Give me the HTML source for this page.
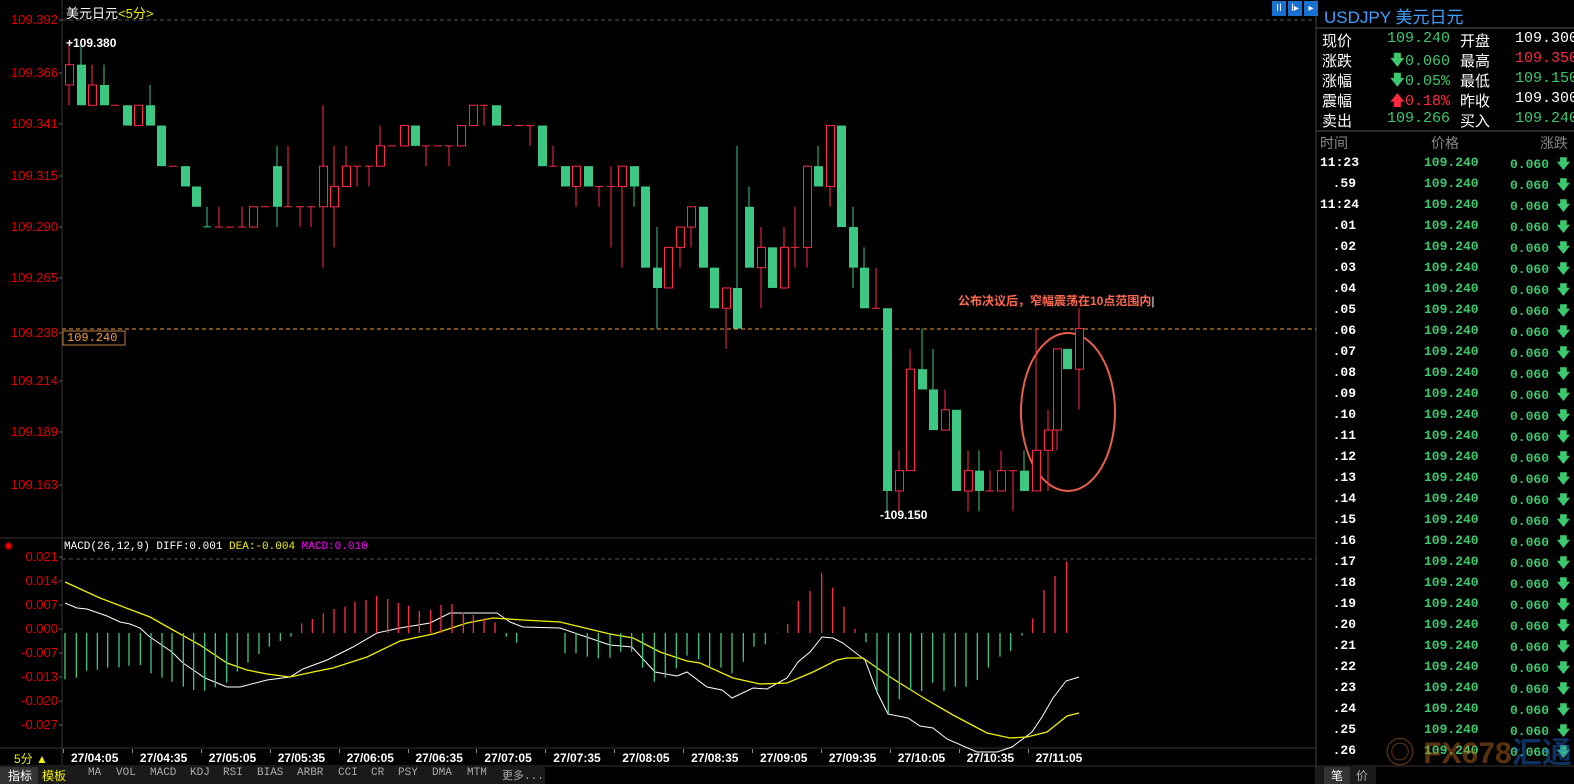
<!DOCTYPE html>
<html><head><meta charset="utf-8"><style>
*{margin:0;padding:0;box-sizing:border-box}
body{width:1574px;height:784px;background:#000;overflow:hidden;position:relative;font-family:"Liberation Sans","Noto Sans CJK SC",sans-serif;color:#fff}
.a{position:absolute;white-space:nowrap}
.ax{position:absolute;right:1516px;font-size:13px;color:#e00000;text-align:right}
.mx{position:absolute;right:1516px;font-size:13px;color:#e00000;text-align:right}
.q{position:absolute;font-size:15px;font-family:"Liberation Mono","Noto Sans CJK SC",monospace}
.row{position:absolute;left:1318px;width:256px;height:21px;font-size:13px;font-family:"Liberation Mono",monospace;font-weight:bold}
.tab{position:absolute;top:767px;font-size:11px;color:#aaa;font-family:"Liberation Mono","Noto Sans CJK SC",monospace}
.ic{position:absolute;top:1px;width:14px;height:15px;background:#1a70d0;color:#fff;font-size:10px;text-align:center;line-height:15px}
</style></head><body>
<svg id="s" width="1574" height="784" style="position:absolute;left:0;top:0">
<line x1="62" y1="0" x2="62" y2="766" stroke="#333"/>
<line x1="1316" y1="0" x2="1316" y2="784" stroke="#444"/>
<line x1="62" y1="20" x2="1316" y2="20" stroke="#555" stroke-dasharray="4,3"/>
<line x1="0" y1="538" x2="1316" y2="538" stroke="#333"/>
<line x1="62" y1="559" x2="1316" y2="559" stroke="#555" stroke-dasharray="4,3"/>
<line x1="0" y1="748" x2="1316" y2="748" stroke="#333"/>
<line x1="0" y1="766" x2="1574" y2="766" stroke="#333"/>
<line x1="1316" y1="28" x2="1574" y2="28" stroke="#555"/>
<line x1="1316" y1="131" x2="1574" y2="131" stroke="#555"/>
<line x1="62" y1="329" x2="1316" y2="329" stroke="#f0a040" stroke-dasharray="4,3"/>
<rect x="63" y="331" width="62" height="14" fill="#000" stroke="#c08040"/>
<ellipse cx="1068" cy="412" rx="47" ry="79" fill="none" stroke="#e8604c" stroke-width="2"/>
<polyline fill="none" stroke="#fff" stroke-width="1" points="65,603 77,608 87,609 107,616 120,622 130,624 140,628 150,637 172,652 183,663 205,678 227,687 240,687 267,680 290,677 303,669 327,660 353,647 377,633 400,628 430,623 450,613 473,613 497,613 510,622 523,627 560,628 610,645 632,647 655,672 677,676 687,672 707,687 722,690 732,698 753,688 767,689 787,678 798,662 810,652 822,637 833,638 843,643 865,660 877,692 888,714 908,718 920,726 933,728 947,739 977,752 997,752 1012,747 1032,732 1042,717 1053,698 1066,681 1079,677"/>
<polyline fill="none" stroke="#f0f000" stroke-width="1.3" points="65,582 100,598 150,617 173,630 200,645 227,663 247,670 267,674 290,677 313,672 333,668 367,657 400,641 433,634 467,623 493,618 523,620 560,622 610,634 633,638 660,652 687,661 700,663 733,678 760,684 787,683 813,672 837,660 847,658 863,658 890,677 927,700 953,715 987,733 1010,738 1027,737 1047,732 1067,716 1079,713"/>
<g id="c"></g>
</svg>
<div class="a" style="left:66px;top:3px;font-size:13px">美元日元<span style="color:#f0f000">&lt;5分&gt;</span></div>
<div class="a" style="left:66px;top:36px;font-size:12px;font-weight:bold">+109.380</div>
<div class="a" style="left:880px;top:508px;font-size:12px;font-weight:bold">-109.150</div>
<div class="a" style="left:67px;top:331px;font-size:12px;color:#f0a040;font-family:'Liberation Mono',monospace">109.240</div>
<div class="a" style="left:958px;top:292px;font-size:12px;font-weight:bold;color:#ff6a50">公布决议后，窄幅震荡在10点范围内<span style="color:#fff;font-weight:normal">|</span></div>
<div class="ax" style="top:12px">109.392</div>
<div class="ax" style="top:65px">109.366</div>
<div class="ax" style="top:116px">109.341</div>
<div class="ax" style="top:168px">109.315</div>
<div class="ax" style="top:219px">109.290</div>
<div class="ax" style="top:270px">109.265</div>
<div class="ax" style="top:325px">109.238</div>
<div class="ax" style="top:373px">109.214</div>
<div class="ax" style="top:424px">109.189</div>
<div class="ax" style="top:477px">109.163</div>
<div class="a" style="left:4px;top:540px;color:#f00;font-size:11px">✺</div>
<div class="a" style="left:64px;top:541px;font-size:11px;font-family:'Liberation Mono',monospace">MACD(26,12,9) DIFF:0.001 <span style="color:#f0f000">DEA:-0.004</span> <span style="color:#f0f">MACD:0.010</span></div>
<div class="mx" style="top:549px">0.021</div>
<div class="mx" style="top:573px">0.014</div>
<div class="mx" style="top:597px">0.007</div>
<div class="mx" style="top:621px">0.000</div>
<div class="mx" style="top:645px">-0.007</div>
<div class="mx" style="top:669px">-0.013</div>
<div class="mx" style="top:693px">-0.020</div>
<div class="mx" style="top:717px">-0.027</div>
<div class="a" style="left:14px;top:750px;font-size:12px;color:#f0f000">5分 ▲</div>
<div id="t"></div>
<div class="a" style="left:0;top:767px;width:545px;height:17px;background:#1a1a1a"></div>
<div class="a" style="left:0;top:767px;width:38px;height:17px;background:#333;font-size:12px;padding-left:8px">指标</div>
<div class="a" style="left:42px;top:767px;font-size:12px;color:#f0f000">模板</div>
<div class="tab" style="left:88px">MA</div><div class="tab" style="left:116px">VOL</div><div class="tab" style="left:150px">MACD</div><div class="tab" style="left:190px">KDJ</div><div class="tab" style="left:223px">RSI</div><div class="tab" style="left:257px">BIAS</div><div class="tab" style="left:297px">ARBR</div><div class="tab" style="left:338px">CCI</div><div class="tab" style="left:371px">CR</div><div class="tab" style="left:398px">PSY</div><div class="tab" style="left:432px">DMA</div><div class="tab" style="left:467px">MTM</div><div class="tab" style="left:502px">更多...</div>
<div class="ic" style="left:1272px">Iǀ</div>
<div class="ic" style="left:1288px">ǀ▸</div>
<div class="ic" style="left:1304px">▸</div>
<div class="a" style="left:1324px;top:3px;font-size:17px;color:#3ea0ff">USDJPY 美元日元</div>
<div class="q" style="left:1322px;top:30px">现价</div><div class="q" style="left:1372px;top:30px;width:78px;text-align:right;color:#3cc86e">109.240</div><div class="q" style="left:1460px;top:30px">开盘</div><div class="q" style="left:1515px;top:30px">109.300</div>
<div class="q" style="left:1322px;top:50px">涨跌</div><div class="q" style="left:1372px;top:50px;width:78px;text-align:right;color:#3cc86e">🡇0.060</div><div class="q" style="left:1460px;top:50px">最高</div><div class="q" style="left:1515px;top:50px;color:#ff2a40">109.350</div>
<div class="q" style="left:1322px;top:70px">涨幅</div><div class="q" style="left:1372px;top:70px;width:78px;text-align:right;color:#3cc86e">🡇0.05%</div><div class="q" style="left:1460px;top:70px">最低</div><div class="q" style="left:1515px;top:70px;color:#3cc86e">109.150</div>
<div class="q" style="left:1322px;top:90px">震幅</div><div class="q" style="left:1372px;top:90px;width:78px;text-align:right;color:#ff2a40">🡅0.18%</div><div class="q" style="left:1460px;top:90px">昨收</div><div class="q" style="left:1515px;top:90px">109.300</div>
<div class="q" style="left:1322px;top:110px">卖出</div><div class="q" style="left:1372px;top:110px;width:78px;text-align:right;color:#3cc86e">109.266</div><div class="q" style="left:1460px;top:110px">买入</div><div class="q" style="left:1515px;top:110px;color:#3cc86e">109.240</div>
<div class="q" style="left:1320px;top:133px;color:#888;font-size:14px">时间</div><div class="q" style="left:1431px;top:133px;color:#888;font-size:14px">价格</div><div class="q" style="left:1540px;top:133px;color:#888;font-size:14px">涨跌</div>
<div id="r"></div>
<div class="a" style="left:1385px;top:728px;font-size:30px;font-weight:bold;color:rgba(200,110,30,0.45)">◎ FX678<span style="color:rgba(30,110,210,0.45)">汇通网</span></div>
<div class="a" style="left:1316px;top:767px;width:60px;height:17px;background:#1a1a1a"></div>
<div class="a" style="left:1324px;top:767px;width:26px;height:17px;background:#333;font-size:12px;padding-left:7px">笔</div>
<div class="a" style="left:1356px;top:767px;font-size:12px;color:#aaa">价</div>
<script>
var Y=function(v){return 20+(39.2-v)*20.3};
var C=[[69,36,37,38,35],[81,37,35,38,35],[92,35,36,37,35],[104,36,35,37,35],[115,35,35,35,35],[127,35,34,35,34],[138,34,35,35,34],[150,35,34,36,34],[161,34,32,34,32],[173,32,32,32,32],[185,32,31,32,31],[196,31,30,31,30],[207,29.01,29,30,29],[219,29,29,30,29],[230,29,29,29,29],[242,29,29,30,29],[253,29,30,30,29],[265,30,30,30,30],[277,32,30,33,29],[288,30,30,33,30],[300,30,30,30,29],[311,30,30,30,29],[323,30,32,35,27],[334,30,31,33,28],[346,31,32,33,31],[357,32,32,32,31],[369,32,32,32,31],[380,32,33,34,32],[392,33,33,33,33],[404,33,34,34,33],[415,34,33,34,33],[426,33,33,33,32],[438,33,33,33,33],[449,33,33,33,32],[461,33,34,34,33],[473,34,35,35,34],[484,35,35,35,34],[496,35,34,35,34],[507,34,34,34,34],[519,34,34,34,34],[530,34,34,34,33],[542,34,32,34,32],[553,32,32,33,32],[565,32,31,32,31],[576,31,32,32,30],[588,32,31,32,31],[599,31,31,31,30],[611,31,31,32,28],[622,31,32,32,27],[634,32,31,32,30],[645,31,27,31,27],[657,27,26,29,24],[668,26,28,28,26],[680,28,29,29,27],[691,29,30,30,28],[703,30,27,30,27],[714,27,25,27,25],[726,25,26,26,23],[737,26,24,33,24],[749,30,27,31,27],[761,27,28,29,25],[772,28,26,28,26],[784,26,28,29,26],[795,28,28,30,27],[807,28,32,32,27],[818,32,31,33,31],[830,31,34,34,30],[841,34,29,34,29],[853,29,27,30,26],[864,27,25,28,25],[876,25,25,27,25],[887,25,16,25,15],[899,16,17,18,15],[910,17,22,23,17],[922,22,21,24,21],[933,21,19,23,19],[945,19,20,21,19],[956,20,16,20,16],[968,16,17,18,15],[979,17,16,18,15],[990,16,16,17,16],[1001,16,17,18,16],[1013,17,17,17,15],[1024,17,16,18,16],[1036,16,18,24,16],[1048,18,19,20,16],[1057,19,23,23,18],[1067,23,22,23,22],[1079,22,24,25,20]];
var h='';var G='#3cc882',R='#ff2a4a';
C.forEach(function(c){var x=c[0],o=Y(c[1]),cl=Y(c[2]),hi=Y(c[3]),lo=Y(c[4]);var dn=c[2]<c[1];var col=dn?G:R;var t=Math.min(o,cl),b=Math.max(o,cl);
h+='<line x1="'+x+'" y1="'+hi+'" x2="'+x+'" y2="'+lo+'" stroke="'+col+'"/>';
if(b-t<1.5){h+='<line x1="'+(x-4)+'" y1="'+t+'" x2="'+(x+4)+'" y2="'+t+'" stroke="'+col+'"/>';}
else if(dn){h+='<rect x="'+(x-4)+'" y="'+t+'" width="9" height="'+(b-t)+'" fill="'+G+'"/>';}
else{h+='<rect x="'+(x-3.5)+'" y="'+t+'" width="8" height="'+(b-t)+'" fill="#000" stroke="'+R+'"/>';}});
var B1=[[195,433],[229,428],[260,407],[292,404],[323,398],[357,397],[387,392],[421,390],[453,415],[486,428],[516,440],[550,455],[581,465],[614,467],[646,457],[680,443],[712,410],[744,383],[777,357],[808,335],[841,318],[873,305],[905,265],[937,252],[970,235],[1002,222],[1035,215],[1065,200],[1098,195],[1130,183],[1163,192],[1195,204],[1226,212],[1258,228],[1292,225],[1323,210],[1356,207],[1390,232],[1420,240],[1452,250],[1485,262],[1519,305],[1550,323]];
var B2=[[15,355],[48,355],[82,365],[115,370],[150,368],[182,350],[215,350],[248,398],[283,440],[316,428],[349,400],[381,362],[416,373],[449,398],[483,398],[516,415],[550,380],[582,335],[616,328],[650,293],[683,267],[715,198],[750,168],[785,115],[818,158],[852,215],[885,282],[918,322],[951,470],[985,535],[1018,493],[1052,465],[1085,468],[1118,443],[1152,468],[1186,455],[1218,455],[1252,435],[1285,398],[1320,365],[1352,348],[1386,302],[1418,250],[1452,165],[1485,123],[1520,80]];
function bar(x,e){var y=535+e/3,z=633;h+='<line x1="'+x+'" y1="'+z+'" x2="'+x+'" y2="'+y+'" stroke="'+(y<z?R:G)+'" stroke-width="1.3"/>';}
B1.forEach(function(b){bar(b[0]/3,b[1])});B2.forEach(function(b){bar(560+b[0]/3,b[1])});
[20,73,124,176,227,278,333,381,432,485,557,581,605,629,653,677,701,725].forEach(function(y){h+='<line x1="59" y1="'+y+'" x2="62" y2="'+y+'" stroke="#666"/>'});
document.getElementById('c').innerHTML=h;
var T=['27/04:05','27/04:35','27/05:05','27/05:35','27/06:05','27/06:35','27/07:05','27/07:35','27/08:05','27/08:35','27/09:05','27/09:35','27/10:05','27/10:35','27/11:05'];
var tt='';T.forEach(function(s,i){var x=71+i*68.9;tt+='<div class="a" style="left:'+x+'px;top:751px;font-size:12px;font-weight:bold;color:#fff">'+s+'</div><div class="a" style="left:'+(x-8)+'px;top:749px;width:1px;height:4px;background:#888"></div>'});
document.getElementById('t').innerHTML=tt;
var rows=['11:23','.59','11:24'];for(var i=1;i<=26;i++)rows.push('.'+(i<10?'0'+i:i));
var rr='';rows.forEach(function(s,i){var y=155+i*21;rr+='<div class="row" style="top:'+y+'px"><span style="position:absolute;'+(s.length>4?'left:2px':'right:218px')+'">'+s+'</span><span style="position:absolute;left:106px;color:#3cc86e">109.240</span><span style="position:absolute;left:192px;color:#3cc86e">0.060 🡇</span></div>'});
document.getElementById('r').innerHTML=rr;
</script>
</body></html>
